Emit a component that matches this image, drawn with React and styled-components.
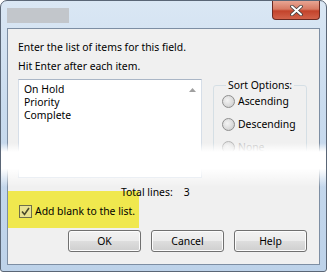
import React from "react";
import styled, { createGlobalStyle } from "styled-components";

const GlobalStyle = createGlobalStyle`
  body {
    margin: 0;
    background: #ffffff;
    font-family: "Segoe UI", "Noto Sans", "DejaVu Sans", sans-serif;
  }
`;

const Window = styled.div`
  position: relative;
  width: 327px;
  height: 272px;
  box-sizing: border-box;
  padding: 0 6px 6px 6px;
  border: 1px solid #5a6676;
  border-radius: 7px 7px 3px 3px;
  background: linear-gradient(180deg, #dae7f4 0%, #c9dbee 40%, #bdd2e9 100%);
  display: flex;
  flex-direction: column;
  overflow: hidden;
`;

const TitleBar = styled.div`
  height: 27px;
  display: flex;
  align-items: flex-start;
  justify-content: space-between;
`;

const TitlePlaceholder = styled.div`
  margin-top: 7px;
  width: 62px;
  height: 15px;
  background: #c2c6cb;
`;

const CloseButton = styled.div`
  width: 46px;
  height: 18px;
  border: 1px solid #6b2a22;
  border-top: none;
  border-radius: 0 0 4px 4px;
  background: linear-gradient(180deg, #e8a593 0%, #d77a63 45%, #c3432b 55%, #d2624a 100%);
  display: flex;
  align-items: center;
  justify-content: center;
`;

const Client = styled.div`
  flex: 1;
  border: 1px solid #7d8ea3;
  background: #f0f0f0;
  display: flex;
  flex-direction: column;
  font-size: 10.4px;
  color: #000;
`;

const Prompt = styled.div`
  padding: 9px 0 0 10px;
  line-height: 19px;
`;

const MainRow = styled.div`
  display: flex;
  align-items: flex-start;
  height: 99px;
  margin-top: 3px;
  padding-left: 10px;
  gap: 11px;
`;

const ListBox = styled.div`
  width: 182px;
  height: 97px;
  background: #ffffff;
  border: 1px solid #d6dee8;
  border-top-color: #aab6c6;
  display: flex;
`;

const ListItems = styled.div`
  flex: 1;
  padding: 3px 0 0 5px;
  line-height: 13px;
`;

const ScrollTrack = styled.div`
  width: 17px;
  display: flex;
  justify-content: center;
  padding-top: 8px;
`;

const GroupBox = styled.fieldset`
  width: 94px;
  height: 88px;
  margin: 0;
  padding: 4px 0 0 8px;
  box-sizing: border-box;
  border: 1px solid #d5dfe5;
  border-radius: 3px;
  display: flex;
  flex-direction: column;
  gap: 10px;
`;

const Legend = styled.legend`
  padding: 0 2px;
  margin-left: 4px;
  line-height: 12px;
`;

const RadioRow = styled.label`
  display: flex;
  align-items: center;
  gap: 3px;
  line-height: 13px;
  color: ${(p) => (p.disabled ? "#a0a0a0" : "#000")};
  opacity: ${(p) => (p.disabled ? 0.6 : 1)};
`;

const RadioDot = styled.span`
  width: 11px;
  height: 11px;
  border-radius: 50%;
  border: 1px solid #8f8f8f;
  background: radial-gradient(circle at 40% 40%, #f4f4f4 0%, #dcdcdc 55%, #c4c4c4 100%);
`;

const TotalRow = styled.div`
  position: relative;
  z-index: 1;
  height: 8px;
  margin-top: 5px;
  padding-left: 113px;
  display: flex;
  gap: 11px;
  line-height: 19px;
`;

const Highlight = styled.div`
  width: 131px;
  height: 37px;
  background: #f0e84e;
  display: flex;
  align-items: center;
  padding: 3px 0 0 11px;
  box-sizing: border-box;
  gap: 3px;
`;

const CheckBox = styled.span`
  width: 11px;
  height: 11px;
  border: 1px solid #6f6f4a;
  background: #e9e28f;
  display: flex;
  align-items: center;
  justify-content: center;
`;

const ButtonRow = styled.div`
  display: flex;
  justify-content: flex-end;
  gap: 10px;
  padding: 2px 12px 0 0;
`;

const Button = styled.div`
  width: 71px;
  height: 20px;
  border: 1px solid #707070;
  border-radius: 3px;
  background: linear-gradient(180deg, #f2f2f2 0%, #ebebeb 48%, #dddddd 52%, #cfcfcf 100%);
  box-shadow: inset 0 0 0 1px #fcfcfc;
  display: flex;
  align-items: center;
  justify-content: center;
`;

const Fade = styled.div`
  position: absolute;
  left: -1px;
  right: -1px;
  top: 142px;
  height: 44px;
  background: linear-gradient(
    180deg,
    rgba(255, 255, 255, 0) 0%,
    #ffffff 20%,
    #ffffff 58%,
    rgba(255, 255, 255, 0) 100%
  );
`;

export default function App() {
  return (
    <>
      <GlobalStyle />
      <Window>
        <TitleBar>
          <TitlePlaceholder />
          <CloseButton>
            <svg width="13" height="11" viewBox="0 0 13 11">
              <path
                d="M2 1.5 L11 9.5 M11 1.5 L2 9.5"
                stroke="#3b3b3b"
                strokeWidth="3.6"
                strokeLinecap="round"
              />
              <path
                d="M2 1.5 L11 9.5 M11 1.5 L2 9.5"
                stroke="#ffffff"
                strokeWidth="2"
                strokeLinecap="round"
              />
            </svg>
          </CloseButton>
        </TitleBar>
        <Client>
          <Prompt>
            Enter the list of items for this field.
            <br />
            Hit Enter after each item.
          </Prompt>
          <MainRow>
            <ListBox>
              <ListItems>
                On Hold
                <br />
                Priority
                <br />
                Complete
              </ListItems>
              <ScrollTrack>
                <svg width="7" height="4" viewBox="0 0 7 4">
                  <path d="M0 4 L3.5 0 L7 4 Z" fill="#a0a0a0" />
                </svg>
              </ScrollTrack>
            </ListBox>
            <GroupBox>
              <Legend>Sort Options:</Legend>
              <RadioRow>
                <RadioDot />
                Ascending
              </RadioRow>
              <RadioRow>
                <RadioDot />
                Descending
              </RadioRow>
              <RadioRow disabled>
                <RadioDot />
                None
              </RadioRow>
            </GroupBox>
          </MainRow>
          <TotalRow>
            <span>Total lines:</span>
            <span>3</span>
          </TotalRow>
          <Highlight>
            <CheckBox>
              <svg width="9" height="9" viewBox="0 0 9 9">
                <path
                  d="M1 4.5 L3.5 7.5 L8 1"
                  stroke="#4a4a2a"
                  strokeWidth="1.6"
                  fill="none"
                />
              </svg>
            </CheckBox>
            Add blank to the list.
          </Highlight>
          <ButtonRow>
            <Button>OK</Button>
            <Button>Cancel</Button>
            <Button>Help</Button>
          </ButtonRow>
        </Client>
        <Fade />
      </Window>
    </>
  );
}
